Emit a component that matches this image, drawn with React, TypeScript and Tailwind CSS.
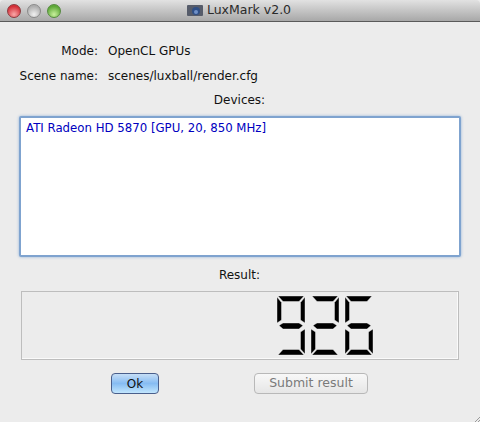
const SEGMENTS: Record<string, string> = {
  a: "1,0 27,0 22,5.5 6,5.5",
  b: "28,1 28,27 23.5,24 23.5,6.5",
  c: "28,33 28,58 23.5,53 23.5,36",
  d: "6,53.5 22,53.5 27,59 1,59",
  e: "0,33 4.5,36 4.5,53 0,58",
  f: "0,1 4.5,6.5 4.5,24 0,27",
  g: "2,29.5 6,27 22,27 26,29.5 22,33 6,33",
};

const DIGITS: Record<string, string[]> = {
  "9": ["a", "b", "c", "d", "f", "g"],
  "2": ["a", "b", "d", "e", "g"],
  "6": ["a", "c", "d", "e", "f", "g"],
};

function Digit({ value }: { value: string }) {
  return (
    <svg width="28" height="59" viewBox="0 0 28 59" className="block overflow-visible">
      {DIGITS[value].map((s) => (
        <polygon key={s} points={SEGMENTS[s]} fill="#000" stroke="#fbfbfb" strokeWidth="0.4" />
      ))}
    </svg>
  );
}

function Light({ from, to, border }: { from: string; to: string; border: string }) {
  return (
    <span
      className="block w-[14px] h-[14px] rounded-full border"
      style={{ background: `radial-gradient(circle at 50% 78%, ${to}, ${from} 72%)`, borderColor: border }}
    />
  );
}

export default function App() {
  return (
    <div
      className="relative w-[480px] h-[422px] overflow-hidden bg-[#ececec] flex flex-col text-[12px] text-[#111]"
      style={{ fontFamily: '"DejaVu Sans", "Noto Sans", sans-serif' }}
    >
      <div className="relative h-[22px] shrink-0 flex items-center justify-center pr-[2px] border-b border-[#5a5a5a] bg-gradient-to-b from-[#e2e2e2] to-[#a8a8a8] rounded-t-[4px]">
        <div className="absolute left-[7px] top-[4px] flex gap-[6px]">
          <Light from="#d42f38" to="#f9a8a8" border="#8c3a3e" />
          <Light from="#aeaeae" to="#f0f0f0" border="#8a8a8a" />
          <Light from="#5ea838" to="#c8f09c" border="#558a3f" />
        </div>
        <svg width="16" height="13" viewBox="0 0 16 13" className="mr-[4px]">
          <rect x="0" y="1" width="16" height="11" rx="1" fill="#565c6a" />
          <circle cx="9" cy="7" r="4" fill="#2f4f86" />
          <circle cx="9" cy="8" r="2" fill="#6f90c8" />
        </svg>
        <span className="text-[#2a2a2a] text-[12.5px]">LuxMark v2.0</span>
      </div>

      <div className="flex flex-col px-[19px]">
        <div className="flex h-[18px] mt-[20px] items-center">
          <span className="w-[79px] text-right">Mode:</span>
          <span className="ml-[10px]">OpenCL GPUs</span>
        </div>
        <div className="flex h-[18px] mt-[7px] items-center">
          <span className="w-[79px] text-right whitespace-nowrap">Scene name:</span>
          <span className="ml-[10px]">scenes/luxball/render.cfg</span>
        </div>
        <div className="h-[18px] mt-[6px] pr-[1px] flex items-center justify-center">Devices:</div>

        <div className="mt-[7px] h-[141px] bg-white border-2 border-[#7fa3cf] rounded-[2px] shadow-[0_0_3px_#8fb0d8] pl-[5px] pt-[1px]">
          <span className="text-[#0000c0] text-[11.75px] leading-[18px] whitespace-nowrap">ATI Radeon HD 5870 [GPU, 20, 850 MHz]</span>
        </div>

        <div className="h-[18px] mt-[9px] pr-[1px] flex items-center justify-center">Result:</div>

        <div className="mt-[7px] mx-[2px] h-[69px] border border-[#bdbdbd] shadow-[inset_-1px_-1px_0_#fafafa] flex items-start justify-end pt-[4px] pr-[85px] gap-[6px]">
          <Digit value="9" />
          <Digit value="2" />
          <Digit value="6" />
        </div>

        <div className="flex mt-[13px] h-[22px]">
          <button className="ml-[92px] w-[48px] h-[21px] rounded-[4px] border border-[#4a5f8c] bg-gradient-to-b from-[#c6def6] via-[#86bcf3] to-[#c2e6fd] text-[#111]">
            Ok
          </button>
          <button className="ml-[95px] w-[114px] h-[21px] rounded-[4px] border border-[#b8b8b8] bg-gradient-to-b from-[#f8f8f8] to-[#e6e6e6] text-[#7a7a7a] text-[12.5px]">
            Submit result
          </button>
        </div>
      </div>

      <svg width="6" height="6" viewBox="0 0 6 6" className="absolute right-0 bottom-0">
        <path d="M6 1 L1 6 M6 4 L4 6" stroke="#9a9a9a" strokeWidth="1" fill="none" />
      </svg>
    </div>
  );
}
